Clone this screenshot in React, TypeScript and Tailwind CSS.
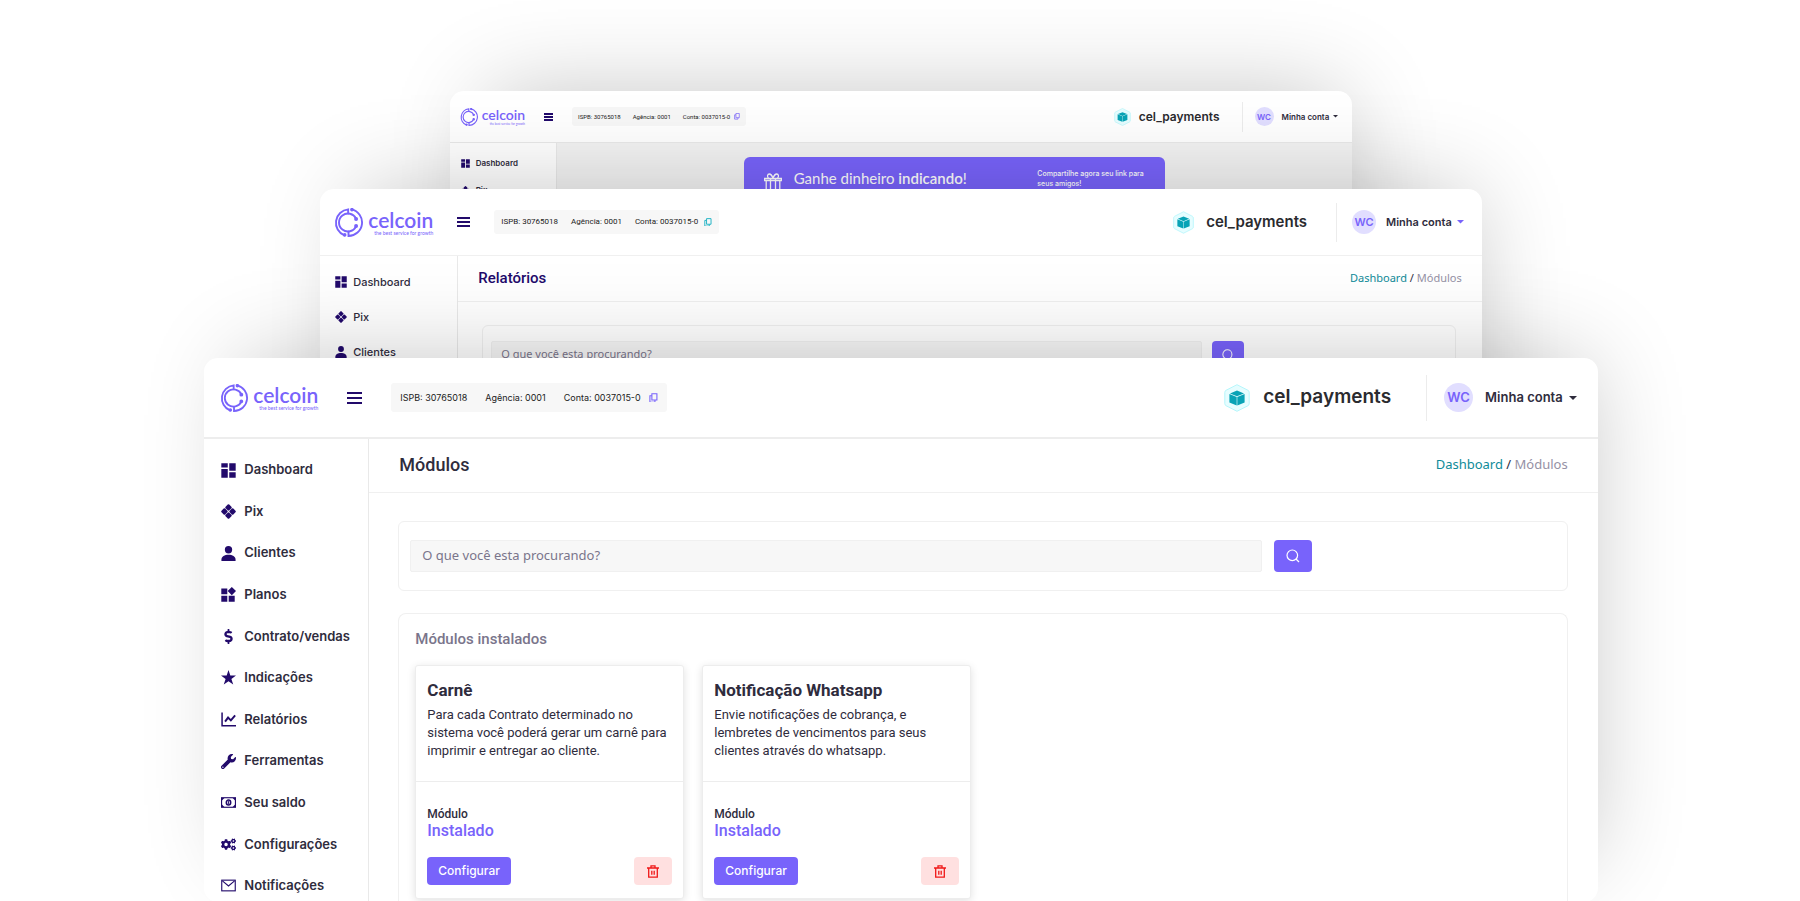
import type { ReactNode } from "react";
import clsx from "clsx";
import { FaCogs, FaDollarSign, FaWrench } from "react-icons/fa";

type Size = "sm" | "md" | "lg";

function DashboardIcon() {
  return (
    <svg viewBox="0 0 14 14" className="size-full" fill="currentColor">
      <path d="M.3.3h6v3.800h-6zM7.700.3h6v7h-6zM.3 5.500h6v8.200h-6zM7.700 8.700h6v5h-6z" />
    </svg>
  );
}

function PixIcon() {
  return (
    <svg viewBox="0 0 14 14" className="size-full" fill="currentColor" stroke="currentColor" strokeWidth="2" strokeLinejoin="round">
      <path d="M7 1.200l2 2-2 2-2-2zM7 8.800l2 2-2 2-2-2zM3.200 5l2 2-2 2-2-2zM10.800 5l2 2-2 2-2-2z" />
    </svg>
  );
}

function PersonIcon() {
  return (
    <svg viewBox="0 0 14 14" className="size-full" fill="currentColor">
      <circle cx="7" cy="3.5" r="3.4" />
      <path d="M.4 14v-1.200C.4 9.800 3.400 8.200 7 8.200s6.600 1.600 6.600 4.600V14z" />
    </svg>
  );
}

function PlansIcon() {
  return (
    <svg viewBox="0 0 15 15" className="size-full" fill="currentColor">
      <path d="M.3 1.500h6v5.800h-6zM.3 8.700h6v6h-6zM7.700 8.700h6v6h-6zM10.800 0L15 4.100l-4.200 4.100-4.100-4.100z" />
    </svg>
  );
}

function StarIcon() {
  return (
    <svg viewBox="0 0 14 14" className="size-full" fill="currentColor">
      <path d="M7 0l1.700 5.100H14L9.700 8.300l1.700 5.300L7 10.400l-4.400 3.200 1.700-5.300L0 5.100h5.300z" />
    </svg>
  );
}

function ChartIcon() {
  return (
    <svg viewBox="0 0 14 14" className="size-full" fill="none" stroke="currentColor" strokeWidth="1.400">
      <path d="M1 .5V12.800h13" />
      <path d="M3.800 9l2.800-3.800 2.600 2.600 4-4.600" strokeWidth="1.800" />
    </svg>
  );
}

function MoneyIcon() {
  return (
    <svg viewBox="0 0 16 12" className="size-full" fill="none" stroke="currentColor">
      <rect x=".6" y=".9" width="14.800" height="10.200" strokeWidth="1.200" />
      <ellipse cx="8" cy="6" rx="2.300" ry="2.700" strokeWidth="1.700" />
      <path d="M8 4.500v3" strokeWidth="1" />
      <path d="M1 1.300h2.600L1 3.900zM15 1.300h-2.600L15 3.900zM1 10.700h2.600L1 8.100zM15 10.700h-2.600L15 8.100z" fill="currentColor" stroke="none" />
    </svg>
  );
}

function MailIcon() {
  return (
    <svg viewBox="0 0 16 13" className="size-full" fill="none" stroke="currentColor" strokeWidth="1.200">
      <rect x=".8" y=".8" width="14.400" height="11.400" />
      <path d="M1.500 1.500L8 7l6.500-5.500" />
    </svg>
  );
}

function CopyIcon() {
  return (
    <svg viewBox="0 0 10 11" className="size-full" fill="none" stroke="currentColor" strokeWidth="1.200">
      <path d="M3.200.8h5.600v7H3.200z" />
      <path d="M3.200 3H1v7.200h5.600V7.800" />
    </svg>
  );
}

function TrashIcon() {
  return (
    <svg viewBox="0 0 12 13" className="h-[13px] w-3" fill="none" stroke="currentColor" strokeWidth="1.300">
      <path d="M0 3h12M4 2.800V.8h4v2M1.700 3v9.200h8.600V3M4.800 5.700v4M7.200 5.700v4" />
    </svg>
  );
}

function SearchIcon() {
  return (
    <svg viewBox="0 0 14 14" className="size-full" fill="none" stroke="currentColor" strokeWidth="1.200">
      <circle cx="6.300" cy="6.300" r="5.300" />
      <path d="M10 10l3 3" />
    </svg>
  );
}

function GiftIcon() {
  return (
    <svg viewBox="0 0 18 18" className="size-full" fill="none" stroke="currentColor" strokeWidth="1.300">
      <path d="M.6 5.500h16.800v2H.6zM2.200 7.500V17h13.600V7.500M6.500 5.500V17M11.500 5.500V17" />
      <path d="M9 5C8 2.500 7 1 5.400 1 3.200 1 3 4 4.500 5M9 5c1-2.500 2-4 3.600-4 2.200 0 2.400 3 .9 4" />
    </svg>
  );
}

function LogoMark() {
  return (
    <svg viewBox="0 0 84 84" className="size-full" fill="none" stroke="currentColor" strokeWidth="5.500" strokeLinecap="round">
      <path d="M41 16V4A39 39 0 0 0 30 79" />
      <path d="M51 4a39 39 0 0 1-9 77V68" />
      <path d="M64 31A26 26 0 1 0 64 53" />
      <circle cx="64" cy="32" r="3" fill="currentColor" />
      <circle cx="64" cy="52" r="3" fill="currentColor" />
      <circle cx="52" cy="5" r="2.500" fill="currentColor" />
      <circle cx="31" cy="78" r="2.500" fill="currentColor" />
    </svg>
  );
}

function CubeBadge() {
  return (
    <svg viewBox="0 0 26 28" className="size-full">
      <path d="M13 .7l11 5.600q1.200.7 1.200 2v11.400q0 1.300-1.200 2l-11 5.600-11-5.600q-1.200-.7-1.200-2V8.300q0-1.300 1.200-2z" fill="#e6fdff" stroke="#b5f6fb" />
      <path d="M13 6.500l7 2.900-7 2.900-7-2.900z" fill="#08a3b6" />
      <path d="M5.400 9.900l7.300 3.100v8.500l-7.300-3zM20.600 9.900l-7.300 3.100v8.500l7.300-3z" fill="#08a3b6" />
    </svg>
  );
}

const menu: { label: string; icon: ReactNode }[] = [
  { label: "Dashboard", icon: <DashboardIcon /> },
  { label: "Pix", icon: <PixIcon /> },
  { label: "Clientes", icon: <PersonIcon /> },
  { label: "Planos", icon: <PlansIcon /> },
  { label: "Contrato/vendas", icon: <FaDollarSign className="size-full" /> },
  { label: "Indicações", icon: <StarIcon /> },
  { label: "Relatórios", icon: <ChartIcon /> },
  { label: "Ferramentas", icon: <FaWrench className="size-full" /> },
  { label: "Seu saldo", icon: <MoneyIcon /> },
  { label: "Configurações", icon: <FaCogs className="size-full" /> },
  { label: "Notificações", icon: <MailIcon /> },
];

const modules = [
  {
    name: "Carnê",
    description: "Para cada Contrato determinado no sistema você poderá gerar um carnê para imprimir e entregar ao cliente.",
  },
  {
    name: "Notificação Whatsapp",
    description: "Envie notificações de cobrança, e lembretes de vencimentos para seus clientes através do whatsapp.",
  },
];

const headerStyles = {
  sm: {
    bar: "h-[52px] pl-[10px] pr-[14px] border-b border-[#e9e9e9]",
    logo: "gap-1",
    mark: "size-[18px]",
    name: "text-[14px] leading-[14px]",
    tag: "text-[3px] leading-[4px]",
    burger: "ml-[19px] w-[9px] gap-px",
    pill: "ml-[19px] h-[19px] gap-3 px-[6px] font-[Roboto,sans-serif] text-[6px]",
    copy: "ml-1 w-[6px] text-[#7863fb]",
    hex: "h-[18px] w-[17px]",
    brand: "ml-2 text-[12px]",
    divider: "ml-[22px] h-[30px]",
    avatar: "ml-3 size-[19px] text-[8px]",
    account: "ml-2 gap-1 text-[8px]",
    caret: "w-[5px] text-[#2f2c3d]",
  },
  md: {
    bar: "h-[67px] pl-[14px] pr-[18px] border-b border-[#f0f0f0]",
    logo: "gap-[5px]",
    mark: "size-[29px]",
    name: "text-[21px] leading-[21px]",
    tag: "text-[5px] leading-[6px]",
    burger: "ml-6 w-[13px] gap-[2px]",
    pill: "ml-6 h-6 gap-[13px] px-[7px] font-[Roboto,sans-serif] text-[8px]",
    copy: "ml-[6px] w-2 text-[#1fb3c4]",
    hex: "h-[23px] w-[21px]",
    brand: "ml-3 text-[15px]",
    divider: "ml-[29px] h-[39px]",
    avatar: "ml-[15px] size-6 text-[11px]",
    account: "ml-[10px] gap-[5px] text-[11px]",
    caret: "w-[7px] text-[#7863fb]",
  },
  lg: {
    bar: "h-[81px] pl-4 pr-[21px] border-b-2 border-[#ededed]",
    logo: "gap-[5px]",
    mark: "size-[28px]",
    name: "text-[21px] leading-[21px]",
    tag: "text-[5px] leading-[6px]",
    burger: "ml-[29px] w-[15px] gap-[3px]",
    pill: "ml-[29px] h-[29px] gap-[18px] px-[9px] text-[9px]",
    copy: "ml-2 w-[9px] text-[#7863fb]",
    hex: "h-[28px] w-[26px]",
    brand: "ml-[13px] text-[19px]",
    divider: "ml-[35px] h-[46px]",
    avatar: "ml-[17px] size-[29px] text-[13px]",
    account: "ml-3 gap-[6px] text-[13px]",
    caret: "w-2 text-[#2f2c3d]",
  },
};

function Header({ size }: { size: Size }) {
  const s = headerStyles[size];
  return (
    <header className={clsx("flex shrink-0 items-center", s.bar)}>
      <a href="#" className={clsx("flex items-center text-[#7863fb]", s.logo)}>
        <span className={s.mark}>
          <LogoMark />
        </span>
        <span className="flex flex-col items-end font-[Lato,sans-serif]">
          <span className={clsx("font-semibold", s.name)}>celcoin</span>
          <span className={s.tag}>the best service for growth</span>
        </span>
      </a>
      <button aria-label="Menu" className={clsx("flex flex-col", s.burger)}>
        <span className="h-[2px] w-full bg-[#220a6b]" />
        <span className="h-[2px] w-full bg-[#220a6b]" />
        <span className="h-[2px] w-full bg-[#220a6b]" />
      </button>
      <div className={clsx("flex items-center rounded-[3px] bg-[#f7f7f7] whitespace-nowrap text-[#222]", s.pill)}>
        <span>ISPB: 30765018</span>
        <span>Agência: 0001</span>
        <span className="flex items-center">
          Conta: 0037015-0
          <button aria-label="Copiar conta" className={s.copy}>
            <CopyIcon />
          </button>
        </span>
      </div>
      <div className="ml-auto flex items-center">
        <span className={s.hex}>
          <CubeBadge />
        </span>
        <span className={clsx("font-semibold text-[#2b2b2f]", s.brand)}>cel_payments</span>
        <span className={clsx("w-px bg-[#ececec]", s.divider)} />
        <span className={clsx("flex items-center justify-center rounded-full bg-[#e1deff] font-semibold text-[#7863fb]", s.avatar)}>WC</span>
        <button className={clsx("flex items-center font-semibold whitespace-nowrap text-[#2f2c3d]", s.account)}>
          Minha conta
          <svg viewBox="0 0 8 4" className={s.caret} fill="currentColor">
            <path d="M0 0h8L4 4z" />
          </svg>
        </button>
      </div>
    </header>
  );
}

const sidebarStyles = {
  sm: { count: 2, nav: "w-[107px] pl-[11px] pt-3 gap-[11px]", item: "h-4 gap-[6px] text-[8px] font-semibold", icon: "size-[9px]" },
  md: { count: 3, nav: "w-[138px] pl-[15px] pt-4 gap-[15px]", item: "h-5 gap-[6px] text-[11px] font-medium", icon: "size-3" },
  lg: { count: 11, nav: "w-[165px] pl-[17px] pt-[21px] pb-[6px] justify-between", item: "h-5 gap-2 text-[13px] font-semibold", icon: "size-[15px]" },
};

function Sidebar({ size }: { size: Size }) {
  const s = sidebarStyles[size];
  return (
    <nav className={clsx("flex shrink-0 flex-col border-r border-[#e9e9e9] text-[#2f2c3d]", s.nav)}>
      {menu.slice(0, s.count).map((item) => (
        <a key={item.label} href="#" className={clsx("flex shrink-0 items-center whitespace-nowrap", s.item)}>
          <span className={clsx("shrink-0 text-[#220a6b]", s.icon)}>{item.icon}</span>
          {item.label}
        </a>
      ))}
    </nav>
  );
}

function SearchBox({ size }: { size: "md" | "lg" }) {
  const lg = size === "lg";
  return (
    <form className={clsx("flex rounded-md border border-[#f0f0f0]", lg ? "gap-3 px-[11px] py-[18px]" : "gap-[10px] px-2 py-[15px]")}>
      <input
        aria-label="Buscar"
        placeholder="O que você esta procurando?"
        className={clsx(
          "w-[74.4%] rounded-xs border border-[#f0f0f0] bg-[#f7f7f7] pb-[2px] font-['Noto_Sans',sans-serif] placeholder:text-[#7a758b]",
          lg ? "h-8 px-[11px] text-[13px]" : "h-[27px] px-[9px] text-[11px]"
        )}
      />
      <button
        type="button"
        aria-label="Pesquisar"
        className={clsx("flex items-center justify-center rounded-[4px] bg-[#7863fb] text-white", lg ? "h-8 w-[38px]" : "h-[27px] w-8")}
      >
        <span className={lg ? "size-[14px]" : "size-3"}>
          <SearchIcon />
        </span>
      </button>
    </form>
  );
}

function PageTitle({ title, size }: { title: string; size: "md" | "lg" }) {
  const lg = size === "lg";
  return (
    <div className={clsx("flex items-center justify-between border-b border-[#f0f0f0]", lg ? "h-[54px] px-[30px] pb-[2px]" : "h-[46px] px-5")}>
      <h1 className={clsx("font-[Roboto,sans-serif] font-medium", lg ? "text-[18px] text-[#2f2c3d]" : "text-[15px] text-[#220a6b]")}>{title}</h1>
      <p className={clsx("font-['Noto_Sans',sans-serif] text-[#9591a5]", lg ? "text-[13px]" : "text-[11px]")}>
        <a href="#" className="text-[#0f8b99]">Dashboard</a> <span className="text-[#2f2c3d]">/</span> Módulos
      </p>
    </div>
  );
}

function ModuleCard({ name, description }: { name: string; description: string }) {
  return (
    <article className="w-[269px] rounded-[3px] border border-[#ededed] bg-white font-[Roboto,sans-serif] text-[#2f2c3d] shadow-[0_2px_8px_rgba(0,0,0,0.12)]">
      <div className="h-[116px] border-b border-[#ededed] px-[11px] pt-3">
        <h3 className="text-[17px] leading-6 font-bold">{name}</h3>
        <p className="mt-1 text-[13px] leading-[18px]">{description}</p>
      </div>
      <div className="px-[11px] pt-6 pb-[13px]">
        <p className="text-[12px] leading-4 font-medium">Módulo</p>
        <p className="text-[16px] leading-[18px] font-medium text-[#7863fb]">Instalado</p>
        <div className="mt-[17px] flex justify-between">
          <button className="h-7 rounded-[4px] bg-[#7863fb] px-[11px] font-[Inter,sans-serif] text-[12px] font-medium text-white">Configurar</button>
          <button aria-label={`Remover ${name}`} className="flex h-7 w-[38px] items-center justify-center rounded-[4px] bg-[#ffe0e0] text-[#f01818]">
            <TrashIcon />
          </button>
        </div>
      </div>
    </article>
  );
}

function Window({ size, className, children }: { size: Size; className: string; children: ReactNode }) {
  return (
    <section
      className={clsx(
        "isolate col-start-1 row-start-1 flex flex-col rounded-[14px] bg-white shadow-[14px_-20px_90px_-24px_rgba(0,0,0,0.24)]",
        className
      )}
    >
      <Header size={size} />
      <div className="flex min-h-0 flex-1">
        <Sidebar size={size} />
        <div className={clsx("min-w-0 flex-1", size === "sm" && "bg-[#f3f3f3]")}>{children}</div>
      </div>
    </section>
  );
}

export default function App() {
  return (
    <main className="grid min-h-screen justify-items-center overflow-hidden bg-white pl-[2px] font-[Inter,sans-serif]">
      <Window size="sm" className="mt-[91px] mb-60 w-[50.2%] overflow-hidden">
        <div className="mx-auto mt-[14px] flex w-[53%] items-start rounded-md bg-[#7863fb] px-5 pt-3 pb-10 text-white">
          <div className="flex items-start gap-3">
            <span className="mt-1 size-[18px] shrink-0">
              <GiftIcon />
            </span>
            <h2 className="font-[Lato,sans-serif] text-[15px] leading-[18px] whitespace-nowrap">
              Ganhe dinheiro <strong className="font-semibold">indicando</strong>!
            </h2>
          </div>
          <p className="ml-auto w-[108px] text-[7px] leading-[10px] font-medium">Compartilhe agora seu link para seus amigos!</p>
        </div>
      </Window>

      <Window size="md" className="mt-[189px] mb-30 w-[64.6%] overflow-hidden">
        <PageTitle title="Relatórios" size="md" />
        <div className="pt-[23px] pr-[26px] pl-6">
          <SearchBox size="md" />
        </div>
      </Window>

      <Window size="lg" className="mt-[358px] w-[77.5%]">
        <PageTitle title="Módulos" size="lg" />
        <div className="flex flex-col gap-[22px] pt-7 pr-[30px] pl-[29px]">
          <SearchBox size="lg" />
          <section className="rounded-t-lg border border-b-0 border-[#f0f0f0] px-4 pt-[13px] pb-[3px]">
            <h2 className="font-[Roboto,sans-serif] text-[15px] leading-6 font-medium text-[#7a758b]">Módulos instalados</h2>
            <div className="mt-[14px] flex gap-[18px]">
              {modules.map((m) => (
                <ModuleCard key={m.name} {...m} />
              ))}
            </div>
          </section>
        </div>
      </Window>
    </main>
  );
}
